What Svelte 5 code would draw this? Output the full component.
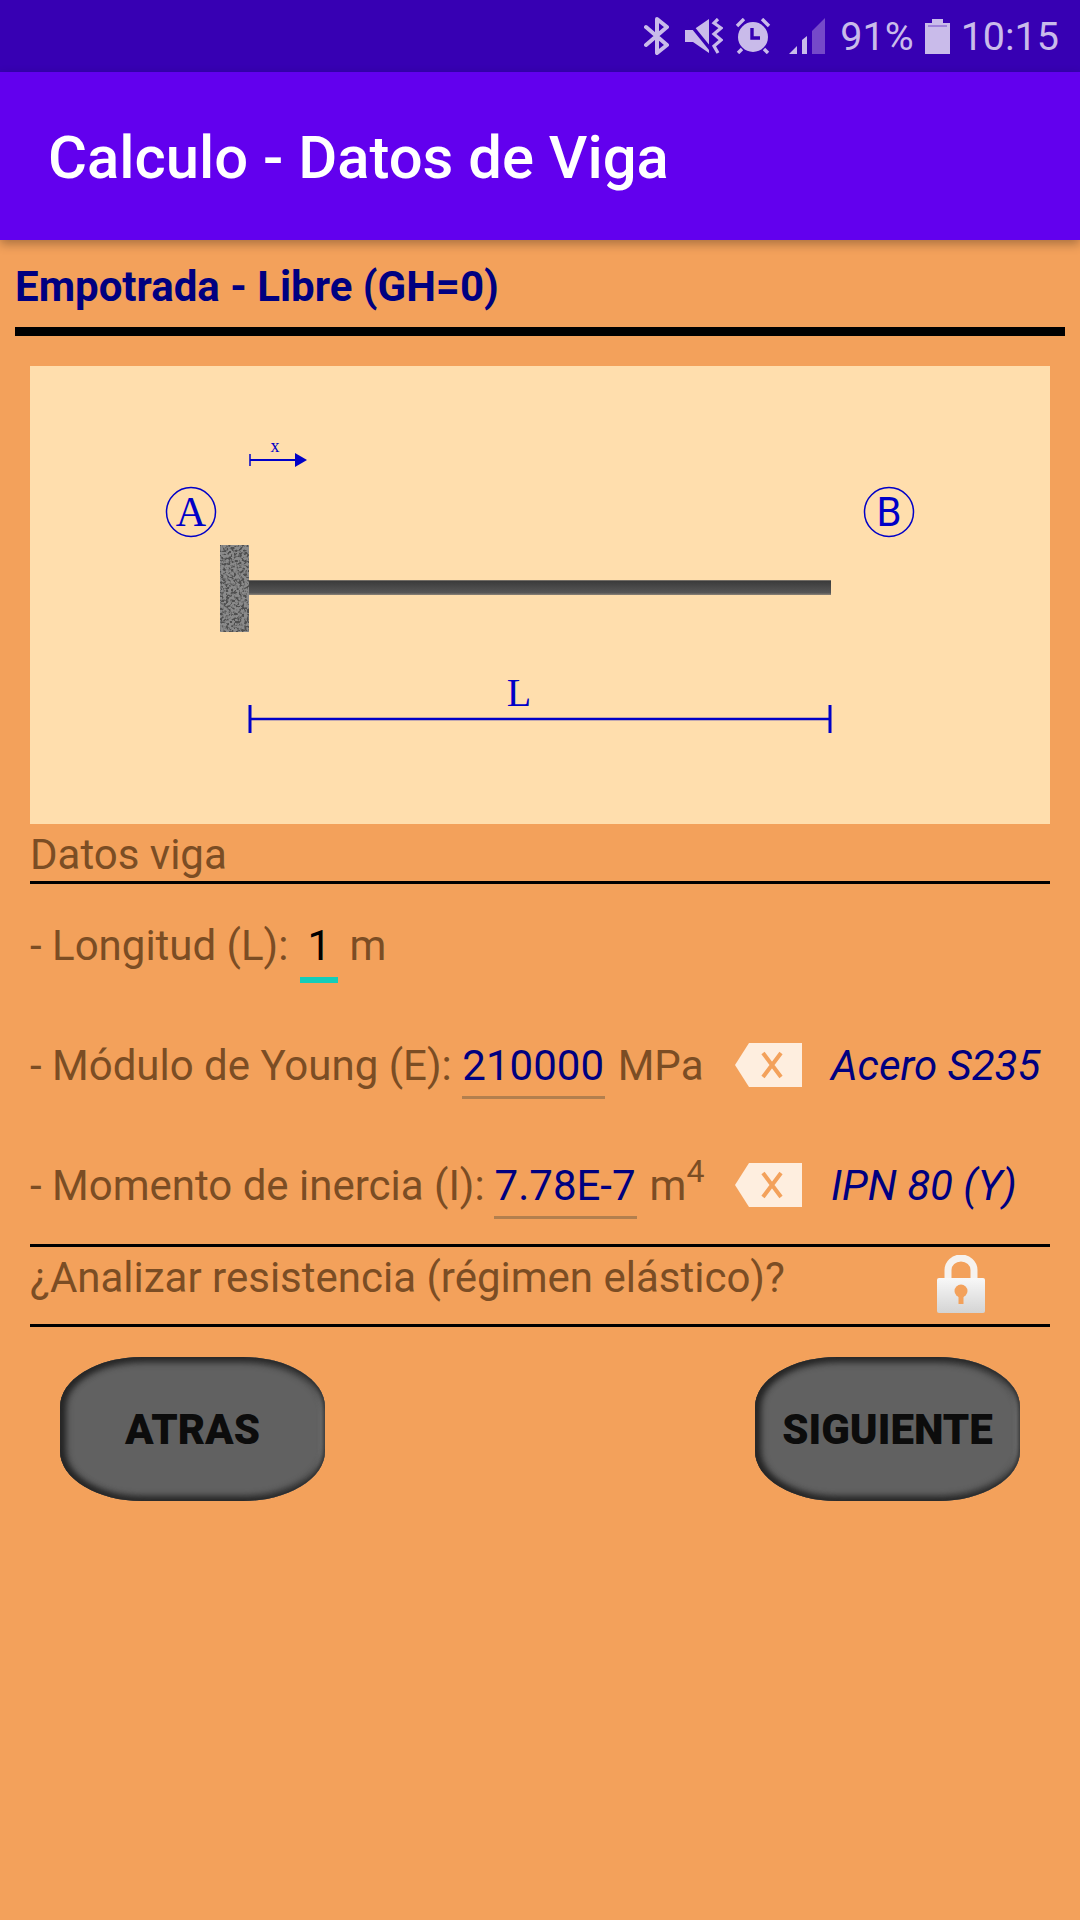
<script>
  const rows = [
    { label: '- Módulo de Young (E):', value: '210000', unit: 'MPa', note: 'Acero S235' },
    { label: '- Momento de inercia (I):', value: '7.78E-7', unit: 'm', sup: '4', note: 'IPN 80 (Y)', gap: true }
  ]
</script>

<div class="screen">
  <div class="statusbar">
    <svg class="bt" viewBox="0 0 26 38" width="26" height="38">
      <path d="M2 10 L23 28 L13 36 V2 L23 10 L2 28" fill="none" stroke="currentColor" stroke-width="4" stroke-linejoin="round" stroke-linecap="round" />
    </svg>
    <svg class="mute" viewBox="0 0 38 36" width="38" height="36">
      <path d="M0 12 H8 L24 1 V35 L8 24 H0 Z" fill="currentColor" />
      <path d="M1 1 L27 33" stroke="#3700b3" stroke-width="3.5" />
      <path d="M33 1 L29 5 L36 10 L29 16 L36 22 L29 28 L33 35" fill="none" stroke="currentColor" stroke-width="3.2" />
    </svg>
    <svg class="alarm" viewBox="0 0 36 36" width="36" height="36">
      <circle cx="18" cy="19" r="15" fill="currentColor" />
      <path d="M2 8 L9 1 M34 8 L27 1 M7 31 L3 35 M29 31 L33 35" stroke="currentColor" stroke-width="3.4" />
      <path d="M17 10 V20 H25" fill="none" stroke="#3700b3" stroke-width="3.4" />
    </svg>
    <svg class="signal" viewBox="0 0 36 36" width="36" height="36">
      <path d="M0 36 L8 28 V36 Z M13 22 L18 18 V36 H13 Z" fill="currentColor" />
      <path d="M23 13 L36 0 V36 H23 Z" fill="#7549c9" />
    </svg>
    <span class="pct">91%</span>
    <svg class="batt" viewBox="0 0 25 35" width="25" height="35">
      <path d="M0 4 H7 V0 H18 V4 H25 V35 H0 Z" fill="currentColor" />
      <path d="M3 7 H22" stroke="#7549c9" stroke-width="1" />
    </svg>
    <span class="clock">10:15</span>
  </div>

  <header class="appbar">Calculo - Datos de Viga</header>

  <h1>Empotrada - Libre (GH=0)</h1>
  <div class="rule"></div>

  <main>
    <svg class="diagram" viewBox="30 366 1020 458" width="1020" height="458">
      <defs>
        <filter id="grain" x="0" y="0" width="100%" height="100%">
          <feTurbulence type="fractalNoise" baseFrequency="0.38" numOctaves="2" seed="4" />
          <feColorMatrix type="matrix" values="0 0 0 0 0.08  0 0 0 0 0.08  0 0 0 0 0.08  4 4 0 0 -3.7" />
          <feComposite in2="SourceGraphic" operator="in" />
          <feMerge>
            <feMergeNode in="SourceGraphic" />
            <feMergeNode />
          </feMerge>
        </filter>
        <linearGradient id="beam" x1="0" y1="0" x2="0" y2="1">
          <stop offset="0" stop-color="#8c8478" />
          <stop offset="0.1" stop-color="#3c3c3c" />
          <stop offset="0.85" stop-color="#565656" />
          <stop offset="1" stop-color="#8c8478" />
        </linearGradient>
      </defs>

      <g class="ink">
        <path d="M250 454 V466" fill="none" stroke="#0000c8" stroke-width="1.5" />
        <path d="M250 460 H296" fill="none" stroke="#0000c8" stroke-width="2" />
        <path d="M295 453 L307 460 L295 467 Z" fill="#0000c8" />
        <text x="275" y="452" text-anchor="middle" font-size="18">x</text>

        <circle cx="191" cy="512" r="24.5" fill="none" stroke="#0000c8" stroke-width="1.5" />
        <text x="191" y="526" text-anchor="middle" font-size="42">A</text>
        <circle cx="889" cy="512" r="24.5" fill="none" stroke="#0000c8" stroke-width="1.5" />
        <text class="sans" x="889" y="526" text-anchor="middle" font-size="40">B</text>

        <path d="M250 705 V733 M830 705 V733" fill="none" stroke="#0000c8" stroke-width="3" />
        <path d="M250 719 H830" fill="none" stroke="#0000c8" stroke-width="2.5" />
        <text x="519" y="706" text-anchor="middle" font-size="40">L</text>
      </g>

      <rect x="220" y="545" width="29" height="87" fill="#8a8a8a" filter="url(#grain)" />
      <rect x="249" y="580" width="582" height="15" fill="url(#beam)" />
    </svg>

    <div class="section-title">Datos viga</div>

    <div class="row">
      <span>- Longitud (L):</span>
      <span class="input focused">1</span>
      <span>m</span>
    </div>

    {#each rows as r}
      <div class="row">
        <span>{r.label}</span>
        <span class="input" class:tight={r.gap}>{r.value}</span>
        <span>{r.unit}{#if r.sup}<sup>{r.sup}</sup>{/if}</span>
        <svg class="del" viewBox="0 0 67 44" width="67" height="44">
          <path d="M0 22 L14 0 H67 V44 H14 Z" fill="#feeedf" />
          <path d="M28 10 L46 34 M46 10 L28 34" stroke="#f3a15b" stroke-width="4" />
        </svg>
        <span class="note">{r.note}</span>
      </div>
    {/each}

    <div class="analyze">
      <span>¿Analizar resistencia (régimen elástico)?</span>
      <svg class="lock" viewBox="0 0 50 58" width="50" height="58">
        <defs>
          <linearGradient id="lockfill" x1="0" y1="0" x2="0" y2="1">
            <stop offset="0" stop-color="#f8f8f8" />
            <stop offset="1" stop-color="#d4d4d4" />
          </linearGradient>
        </defs>
        <path d="M12 26 V15 A13 12 0 0 1 38 15 V26" fill="none" stroke="#f6f2ee" stroke-width="7" />
        <rect x="1" y="23" width="48" height="35" rx="2" fill="url(#lockfill)" />
        <circle cx="25" cy="36" r="6.5" fill="#f3a15b" />
        <rect x="22.5" y="38" width="5" height="11" fill="#f3a15b" />
      </svg>
    </div>

    <div class="buttons">
      <button>ATRAS</button>
      <button>SIGUIENTE</button>
    </div>
  </main>
</div>

<style>
  :global(body) {
    background: #f3a15b;
  }

  .screen {
    min-height: 1920px;
    background: #f3a15b;
    font-family: Roboto, sans-serif;
    color: #7b4d24;
  }

  .statusbar {
    height: 72px;
    box-sizing: border-box;
    background: #3700b3;
    color: #c9bbea;
    display: flex;
    align-items: center;
    justify-content: flex-end;
    padding-right: 21px;
    font-size: 39.5px;
  }

  .statusbar svg {
    flex-shrink: 0;
  }

  .bt { margin-right: 15px; }
  .mute { margin-right: 12px; }
  .alarm { margin-right: 18px; }
  .signal { margin-right: 15px; }
  .batt { margin: 0 11px 0 11px; }

  .appbar {
    height: 168px;
    box-sizing: border-box;
    background: #6200ee;
    color: #fff;
    font-size: 59.8px;
    font-weight: 500;
    display: flex;
    align-items: center;
    padding: 4px 0 0 48px;
    box-shadow: 0 4px 10px rgba(0, 0, 0, 0.3);
    position: relative;
  }

  h1 {
    margin: 0;
    height: 87px;
    box-sizing: border-box;
    padding: 22px 0 0 15px;
    font-size: 42px;
    line-height: 49px;
    font-weight: 700;
    color: #000080;
  }

  .rule {
    height: 9px;
    margin: 0 15px;
    background: #000;
  }

  main {
    padding: 30px 30px 0;
  }

  .diagram {
    display: block;
    background: #ffdead;
  }

  .ink text {
    font-family: "Liberation Serif", serif;
    fill: #0000c8;
  }

  .ink text.sans {
    font-family: Roboto, sans-serif;
  }

  .section-title {
    height: 60px;
    box-sizing: border-box;
    padding-top: 6px;
    font-size: 42px;
    line-height: 49px;
    border-bottom: 3px solid #000;
  }

  .row {
    height: 120px;
    box-sizing: border-box;
    padding-top: 37px;
    display: flex;
    align-items: baseline;
    font-size: 42px;
    line-height: 49px;
    white-space: nowrap;
  }

  .input {
    box-sizing: border-box;
    margin: 0 13px 0 10px;
    padding-bottom: 6px;
    min-width: 143px;
    text-align: center;
    color: #000080;
    border-bottom: 3px solid #b27f4e;
  }

  .input.tight {
    margin-left: 9px;
  }

  .input.focused {
    min-width: 38px;
    margin: 0 11px 0 12px;
    padding-bottom: 7px;
    color: #000;
    border-bottom: 6px solid #13cdb9;
  }

  sup {
    font-size: 32px;
    line-height: 0;
    vertical-align: 18px;
  }

  .del {
    margin-left: auto;
    align-self: flex-start;
    margin-top: 2px;
  }

  .note {
    width: 248px;
    padding-left: 29px;
    box-sizing: border-box;
    color: #000080;
    font-style: italic;
  }

  .analyze {
    height: 83px;
    box-sizing: border-box;
    border-top: 3px solid #000;
    border-bottom: 3px solid #000;
    display: flex;
    align-items: flex-start;
    justify-content: space-between;
    padding: 6px 64px 0 0;
    font-size: 42px;
    line-height: 49px;
  }

  .lock {
    margin-top: 2px;
  }

  .buttons {
    display: flex;
    justify-content: space-between;
    padding: 30px 30px 0;
  }

  button {
    width: 265px;
    height: 144px;
    border: 0;
    border-radius: 82px / 50px;
    background: #616161;
    color: #0c0c0c;
    font-family: Roboto, sans-serif;
    font-size: 42px;
    font-weight: 900;
    padding: 0;
    box-shadow:
      inset 6px 0 7px #262626,
      inset 0 5px 7px #262626,
      inset 0 -5px 6px #2c2c2c,
      inset -4px 0 5px #8a8a8a;
  }
</style>
